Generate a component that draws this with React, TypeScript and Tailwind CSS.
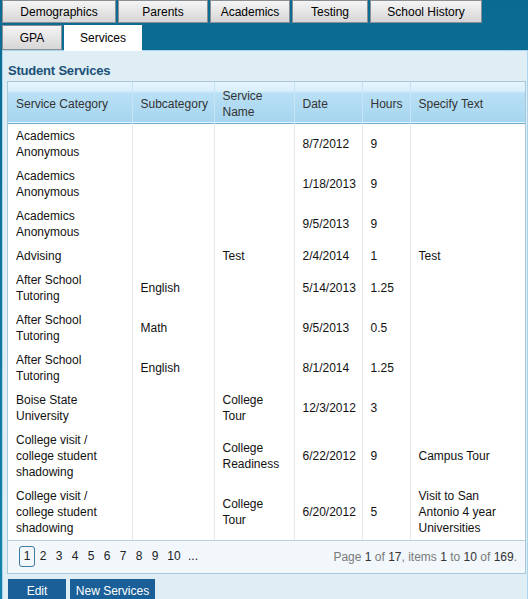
import React from "react";

type Row = { cat: string[]; sub: string; name: string[]; date: string; hours: string; spec: string[] };

const rows: Row[] = [
  { cat: ["Academics", "Anonymous"], sub: "", name: [], date: "8/7/2012", hours: "9", spec: [] },
  { cat: ["Academics", "Anonymous"], sub: "", name: [], date: "1/18/2013", hours: "9", spec: [] },
  { cat: ["Academics", "Anonymous"], sub: "", name: [], date: "9/5/2013", hours: "9", spec: [] },
  { cat: ["Advising"], sub: "", name: ["Test"], date: "2/4/2014", hours: "1", spec: ["Test"] },
  { cat: ["After School", "Tutoring"], sub: "English", name: [], date: "5/14/2013", hours: "1.25", spec: [] },
  { cat: ["After School", "Tutoring"], sub: "Math", name: [], date: "9/5/2013", hours: "0.5", spec: [] },
  { cat: ["After School", "Tutoring"], sub: "English", name: [], date: "8/1/2014", hours: "1.25", spec: [] },
  { cat: ["Boise State", "University"], sub: "", name: ["College", "Tour"], date: "12/3/2012", hours: "3", spec: [] },
  { cat: ["College visit /", "college student", "shadowing"], sub: "", name: ["College", "Readiness"], date: "6/22/2012", hours: "9", spec: ["Campus Tour"] },
  { cat: ["College visit /", "college student", "shadowing"], sub: "", name: ["College", "Tour"], date: "6/20/2012", hours: "5", spec: ["Visit to San", "Antonio 4 year", "Universities"] },
];

function Lines({ l }: { l: string[] }) {
  return (
    <>
      {l.map((t, i) => (
        <div key={i}>{t}</div>
      ))}
    </>
  );
}

const tabCls =
  "border border-[#8a8f93] bg-gradient-to-b from-[#f5f5f5] to-[#d6d6d6] text-black text-center text-[12px]";

export default function App() {
  return (
    <div className="w-[528px] h-[599px] overflow-hidden bg-gradient-to-b from-[#0b6a92] to-[#1583ab] font-['Liberation_Sans',sans-serif] text-[12px] text-[#111]">
      <div className="flex gap-[2px] pl-[2px] h-[23px]">
        <div className={tabCls + " w-[114px] leading-[23px]"}>Demographics</div>
        <div className={tabCls + " w-[90px] leading-[23px]"}>Parents</div>
        <div className={tabCls + " w-[80px] leading-[23px]"}>Academics</div>
        <div className={tabCls + " w-[76px] leading-[23px]"}>Testing</div>
        <div className={tabCls + " w-[112px] leading-[23px]"}>School History</div>
      </div>
      <div className="flex gap-[2px] pl-[2px] mt-[2px] h-[25px] relative z-10">
        <div className={tabCls + " w-[60px] leading-[24px]"}>GPA</div>
        <div className="w-[78px] h-[26px] bg-white text-center leading-[26px] text-black">Services</div>
      </div>
      <div className="ml-[2px] border border-[#a9d4ec] bg-[#dfedf5] h-[560px] pl-[4px] pr-[1px]">
        <div className="mt-[12px] h-[16px] leading-[16px] pl-[1px] text-[13px] font-bold text-[#1b5077] tracking-[-0.2px]">
          Student Services
        </div>
        <div className="mt-[2px] w-[519px] border border-[#a9c7da] bg-white">
          <table className="w-full table-fixed border-collapse">
            <colgroup>
              <col className="w-[124px]" />
              <col className="w-[82px]" />
              <col className="w-[80px]" />
              <col className="w-[68px]" />
              <col className="w-[48px]" />
              <col />
            </colgroup>
            <thead>
              <tr className="h-[41px] bg-[linear-gradient(to_bottom,#e8f5fc_0%,#d9effb_22%,#b9e0f5_28%,#a6d5ef_100%)] border-b border-[#6aaed6]">
                {[["Service Category"], ["Subcategory"], ["Service", "Name"], ["Date"], ["Hours"], ["Specify Text"]].map((h, i) => (
                  <th
                    key={i}
                    className={
                      "text-left font-normal text-[#333] align-middle px-[8px] pt-[4px] leading-[16px] " +
                      (i > 0 ? "border-l border-[#c6e4f4]" : "")
                    }
                  >
                    <Lines l={h} />
                  </th>
                ))}
              </tr>
            </thead>
            <tbody>
              {rows.map((r, i) => (
                <tr key={i} className="leading-[16px]">
                  <td className="px-[8px] py-[4px] align-middle">
                    <Lines l={r.cat} />
                  </td>
                  <td className="px-[8px] py-[4px] align-middle border-l border-[#e8e8e8]">{r.sub}</td>
                  <td className="px-[8px] py-[4px] align-middle border-l border-[#e8e8e8]">
                    <Lines l={r.name} />
                  </td>
                  <td className="px-[8px] py-[4px] align-middle border-l border-[#e8e8e8]">{r.date}</td>
                  <td className="px-[8px] py-[4px] align-middle border-l border-[#e8e8e8]">{r.hours}</td>
                  <td className="px-[8px] py-[4px] align-middle border-l border-[#e8e8e8]">
                    <Lines l={r.spec} />
                  </td>
                </tr>
              ))}
            </tbody>
          </table>
          <div className="h-[33px] border-t border-[#b9cfdd] bg-[#f1f7fb] flex items-center justify-between pl-[11px] pr-[8px]">
            <div className="flex items-center text-[#222]">
              {["1", "2", "3", "4", "5", "6", "7", "8", "9", "10", "..."].map((n, i) => (
                <div
                  key={i}
                  className={
                    "h-[21px] leading-[19px] text-center " +
                    (i === 0
                      ? "w-[16px] border border-[#3e7ca6] rounded-[3px]"
                      : n === "10"
                      ? "w-[22px] border border-transparent"
                      : "w-[16px] border border-transparent")
                  }
                >
                  {n}
                </div>
              ))}
            </div>
            <div className="text-[#7a7a7a]">
              Page <span className="text-[#333]">1</span> of <span className="text-[#333]">17</span>, items{" "}
              <span className="text-[#333]">1</span> to <span className="text-[#333]">10</span> of{" "}
              <span className="text-[#333]">169</span>.
            </div>
          </div>
        </div>
        <div className="flex gap-[4px] mt-[5px] pl-[1px]">
          <div className="w-[58px] h-[24px] bg-[#1a5f98] text-white text-center leading-[24px]">Edit</div>
          <div className="w-[85px] h-[24px] bg-[#1a5f98] text-white text-center leading-[24px]">New Services</div>
        </div>
      </div>
    </div>
  );
}
